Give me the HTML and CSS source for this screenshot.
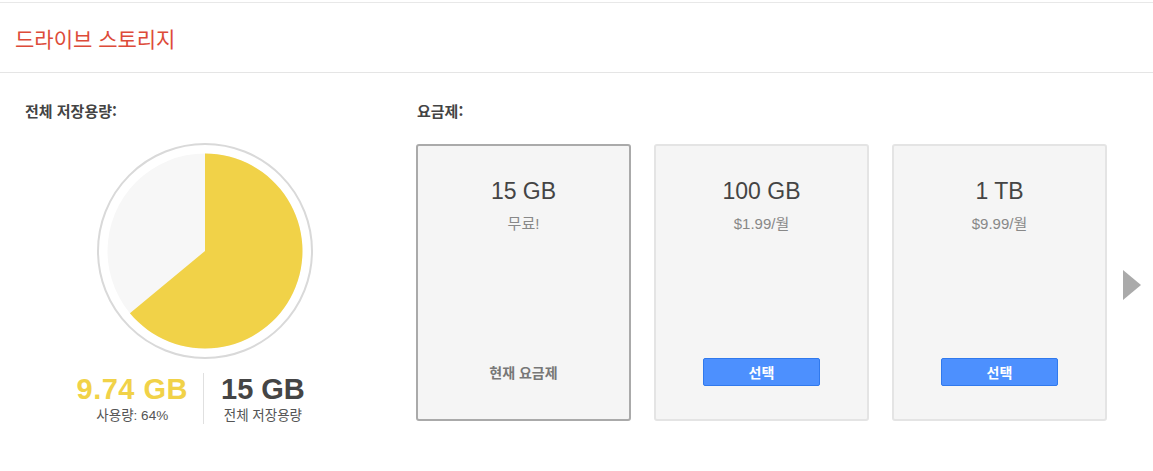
FILE: index.html
```html
<!DOCTYPE html>
<html lang="ko">
<head>
<meta charset="utf-8">
<title>드라이브 스토리지</title>
<link rel="stylesheet" href="styles.css">
</head>
<body>
<header class="header">
  <h1 class="title">드라이브 스토리지</h1>
</header>
<main class="main">
  <section class="usage">
    <h2 class="label">전체 저장용량:</h2>
    <div class="pie-wrap">
      <svg class="pie" width="216" height="216" viewBox="0 0 216 216">
        <circle cx="108" cy="108" r="107" fill="#ffffff" stroke="#d9d9d9" stroke-width="2"/>
        <circle cx="108" cy="108" r="97.5" fill="#f7f7f7"/>
        <path d="M108 108 L108 10.5 A97.5 97.5 0 1 1 32.9 170.2 Z" fill="#f1d248"/>
      </svg>
    </div>
    <div class="stats">
      <div class="stat stat-used">
        <div class="stat-num used">9.74 GB</div>
        <div class="stat-cap">사용량: 64%</div>
      </div>
      <div class="stat-divider"></div>
      <div class="stat stat-total">
        <div class="stat-num total">15 GB</div>
        <div class="stat-cap">전체 저장용량</div>
      </div>
    </div>
  </section>
  <section class="plans">
    <h2 class="label">요금제:</h2>
    <div class="plan-row">
      <div class="card current">
        <div class="card-size">15 GB</div>
        <div class="card-price">무료!</div>
        <div class="card-foot"><span class="current-text">현재 요금제</span></div>
      </div>
      <div class="card">
        <div class="card-size">100 GB</div>
        <div class="card-price">$1.99/월</div>
        <div class="card-foot"><button class="btn">선택</button></div>
      </div>
      <div class="card">
        <div class="card-size">1 TB</div>
        <div class="card-price">$9.99/월</div>
        <div class="card-foot"><button class="btn">선택</button></div>
      </div>
      <div class="next-arrow"></div>
    </div>
  </section>
</main>
</body>
</html>
```
FILE: styles.css
```css
html, body {
  margin: 0;
  padding: 0;
  background: #ffffff;
}
body {
  font-family: "Liberation Sans", "Noto Sans CJK KR", sans-serif;
  color: #444444;
}
.header {
  margin-top: 2px;
  height: 69px;
  border-top: 1px solid #e8e8e8;
  border-bottom: 1px solid #e5e5e5;
  display: flex;
  align-items: center;
  padding-left: 15px;
}
.title {
  margin: 0;
  font-size: 21px;
  font-weight: normal;
  color: #dd4b39;
  line-height: 24px;
  font-family: "Noto Sans CJK KR", sans-serif;
}
.main {
  display: flex;
  padding: 28px 0 0 25px;
  gap: 32px;
}
.label {
  margin: 0;
  font-size: 15px;
  font-weight: bold;
  line-height: 20px;
  color: #444444;
  font-family: "Noto Sans CJK KR", sans-serif;
}
.usage {
  width: 360px;
  display: flex;
  flex-direction: column;
}
.pie-wrap {
  display: flex;
  justify-content: center;
  margin-top: 22px;
}
.pie {
  display: block;
}
.stats {
  display: grid;
  grid-template-columns: 1fr 1px 1fr;
  margin-top: 14px;
  padding-right: 3px;
}
.stat {
  text-align: center;
}
.stat-used {
  justify-self: end;
  padding-right: 15px;
}
.stat-total {
  justify-self: start;
  padding-left: 17px;
}
.stat-divider {
  background: #e0e0e0;
  height: 51px;
}
.stat-num {
  font-size: 29px;
  font-weight: bold;
  line-height: 33px;
}
.stat-num.used {
  color: #f1d248;
  letter-spacing: 0.5px;
}
.stat-num.total {
  color: #454545;
}
.stat-cap {
  font-size: 13.5px;
  line-height: 20px;
  color: #555555;
}
.plans {
  display: flex;
  flex-direction: column;
}
.plan-row {
  display: flex;
  align-items: center;
  gap: 23px;
  margin-top: 23px;
  margin-left: -1px;
}
.card {
  width: 211px;
  height: 273px;
  border: 2px solid #e4e4e4;
  border-radius: 3px;
  background: #f5f5f5;
  display: flex;
  flex-direction: column;
  align-items: center;
  box-sizing: content-box;
}
.card.current {
  border-color: #aaaaaa;
}
.card-size {
  margin-top: 32px;
  font-size: 23px;
  line-height: 26px;
  color: #444444;
}
.card-price {
  margin-top: 10px;
  font-size: 15px;
  line-height: 20px;
  color: #888888;
}
.card-foot {
  margin-top: auto;
  margin-bottom: 32px;
  height: 30px;
  display: flex;
  align-items: center;
  justify-content: center;
}
.current-text {
  font-size: 14px;
  font-weight: bold;
  color: #777777;
  line-height: 20px;
  position: relative;
  top: 1px;
}
.btn {
  width: 117px;
  height: 28px;
  border: 1px solid #3079ed;
  border-radius: 2px;
  background: #4d90fe;
  color: #ffffff;
  font-family: "Noto Sans CJK KR", sans-serif;
  font-size: 14px;
  font-weight: bold;
  padding: 0;
  line-height: 26px;
}
.next-arrow {
  width: 0;
  height: 0;
  border-top: 15px solid transparent;
  border-bottom: 15px solid transparent;
  border-left: 18px solid #aaaaaa;
  margin-left: -7px;
  margin-top: 4px;
}
```
